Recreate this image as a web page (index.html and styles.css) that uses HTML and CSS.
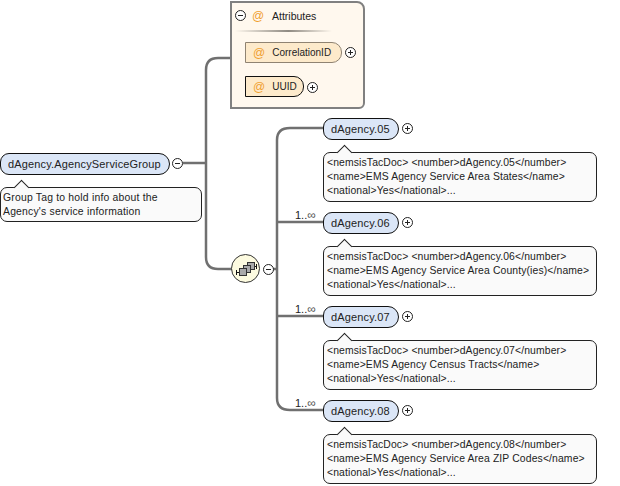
FILE: index.html
```html
<!DOCTYPE html>
<html lang="en">
<head>
<meta charset="utf-8">
<title>dAgency.AgencyServiceGroup</title>
<link rel="stylesheet" href="styles.css">
</head>
<body>
<main class="canvas">
  <svg class="wires" width="620" height="486" viewBox="0 0 620 486">
    <defs>
      <linearGradient id="sep" x1="0" x2="1" y1="0" y2="0">
        <stop offset="0" stop-color="#fff8ee"/>
        <stop offset=".55" stop-color="#8f8a82"/>
        <stop offset="1" stop-color="#fff8ee"/>
      </linearGradient>
    </defs>
    <g class="wire">
      <path d="M183 163H206"/>
      <path d="M232 58H218Q206 58 206 70V257Q206 269 218 269H232"/>
      <path d="M272 269H277"/>
      <path d="M323 128H290Q277 128 277 140V398Q277 410 290 410H323"/>
      <path d="M277 222H323"/>
      <path d="M277 316H323"/>
    </g>
  </svg>

  <div class="node root">dAgency.AgencyServiceGroup</div>
  <button class="toggle t-root minus"></button>
  <div class="doc doc-root">Group Tag to hold info about the<br>Agency's service information</div>

  <section class="attrs">
    <button class="toggle t-attrs minus"></button>
    <span class="at at-head">@</span>
    <span class="attrs-title">Attributes</span>
    <svg class="sep" width="97" height="2"><rect width="97" height="2" fill="url(#sep)"/></svg>
    <div class="attr a-corr"><span class="at">@</span><span>CorrelationID</span></div>
    <button class="toggle t-corr plus"></button>
    <div class="attr a-uuid"><span class="at">@</span><span>UUID</span></div>
    <button class="toggle t-uuid plus"></button>
  </section>

  <div class="compositor">
    <svg width="27" height="27" viewBox="0 0 27 27">
      <path class="c-line" d="M4 17.500H7M22 11.500H24"/>
      <path class="c-cap" d="M4.500 15V20M24.500 9V14"/>
      <rect class="c-box" x="15.500" y="7.500" width="7" height="7"/>
      <rect class="c-box" x="11.500" y="10.500" width="7" height="7"/>
      <rect class="c-box" x="7.500" y="13.500" width="7" height="7"/>
    </svg>
  </div>
  <button class="toggle t-comp minus"></button>

  <div class="node el e5">dAgency.05</div>
  <button class="toggle p5 plus"></button>
  <div class="doc d5">&lt;nemsisTacDoc&gt; &lt;number&gt;dAgency.05&lt;/number&gt;<br>&lt;name&gt;EMS Agency Service Area States&lt;/name&gt;<br>&lt;national&gt;Yes&lt;/national&gt;...</div>

  <span class="occ o6">1..<i>∞</i></span>
  <div class="node el e6">dAgency.06</div>
  <button class="toggle p6 plus"></button>
  <div class="doc d6">&lt;nemsisTacDoc&gt; &lt;number&gt;dAgency.06&lt;/number&gt;<br>&lt;name&gt;EMS Agency Service Area County(ies)&lt;/name&gt;<br>&lt;national&gt;Yes&lt;/national&gt;...</div>

  <span class="occ o7">1..<i>∞</i></span>
  <div class="node el e7">dAgency.07</div>
  <button class="toggle p7 plus"></button>
  <div class="doc d7">&lt;nemsisTacDoc&gt; &lt;number&gt;dAgency.07&lt;/number&gt;<br>&lt;name&gt;EMS Agency Census Tracts&lt;/name&gt;<br>&lt;national&gt;Yes&lt;/national&gt;...</div>

  <span class="occ o8">1..<i>∞</i></span>
  <div class="node el e8">dAgency.08</div>
  <button class="toggle p8 plus"></button>
  <div class="doc d8">&lt;nemsisTacDoc&gt; &lt;number&gt;dAgency.08&lt;/number&gt;<br>&lt;name&gt;EMS Agency Service Area ZIP Codes&lt;/name&gt;<br>&lt;national&gt;Yes&lt;/national&gt;...</div>
</main>
</body>
</html>
```
FILE: styles.css
```css
* { box-sizing: border-box; }
html, body { margin: 0; padding: 0; background: #fff; }
.canvas {
  position: relative;
  width: 620px;
  height: 486px;
  overflow: hidden;
  font-family: "Liberation Sans", Arial, sans-serif;
  color: #222;
}
.wires { position: absolute; left: 0; top: 0; }
.wire path { fill: none; stroke: #707070; stroke-width: 2.500; }

.node {
  position: absolute;
  display: flex;
  align-items: center;
  height: 22px;
  border: 1px solid #111;
  border-radius: 9px 11px 11px 9px;
  background: #dbe6f7;
  font-size: 11px;
  letter-spacing: .15px;
  white-space: nowrap;
}
.root { left: 0; top: 153px; width: 170px; padding-left: 7px; }
.el { left: 323px; width: 76px; padding: 0 0 1px 7px; }
.e5 { top: 118px; }
.e6 { top: 212px; }
.e7 { top: 306px; }
.e8 { top: 400px; }

.doc {
  position: absolute;
  border: 1px solid #222;
  border-radius: 7px;
  background: #fafafa;
  font-size: 10.400px;
  line-height: 14px;
  letter-spacing: .12px;
  white-space: nowrap;
}
.doc::before {
  content: "";
  position: absolute;
  left: 15px;
  top: -6px;
  width: 10px;
  height: 10px;
  background: #fafafa;
  border-left: 1px solid #222;
  border-top: 1px solid #222;
  transform: rotate(45deg);
  transform-origin: center;
}
.doc-root { left: 0; top: 187px; width: 202px; height: 35px; padding: 3px 0 0 2px; letter-spacing: .2px; }
.d5, .d6, .d7, .d8 { left: 323px; width: 274px; height: 50px; padding: 3px 0 0 3px; }
.d5 { top: 152px; }
.d6 { top: 246px; }
.d7 { top: 340px; }
.d8 { top: 434px; }

.toggle {
  position: absolute;
  width: 11px;
  height: 11px;
  padding: 0;
  border: 1px solid #222;
  border-radius: 50%;
  background: #fff;
}
.toggle::before {
  content: "";
  position: absolute;
  left: 2px;
  top: 4px;
  width: 5px;
  height: 1px;
  background: #222;
}
.plus::after {
  content: "";
  position: absolute;
  left: 4px;
  top: 2px;
  width: 1px;
  height: 5px;
  background: #222;
}
.t-root { left: 172px; top: 158px; }
.t-comp { left: 263px; top: 264px; }
.p5 { left: 402px; top: 123px; }
.p6 { left: 402px; top: 217px; }
.p7 { left: 402px; top: 311px; }
.p8 { left: 402px; top: 405px; }

.attrs {
  position: absolute;
  left: 230px;
  top: 1px;
  width: 135px;
  height: 108px;
  border: 2px solid #808080;
  border-radius: 0 8px 6px 0;
  background: #fff8ee;
  font-size: 10px;
}
.t-attrs { left: 3px; top: 7px; }
.t-corr { left: 113px; top: 44px; }
.t-uuid { left: 75px; top: 79px; }
.at { color: #f0a030; font-size: 12px; }
.at-head { position: absolute; left: 20px; top: 6px; }
.attrs-title { position: absolute; left: 40px; top: 7px; font-size: 10.500px; }
.sep { position: absolute; left: 3px; top: 27px; }
.attr {
  position: absolute;
  left: 13px;
  display: flex;
  align-items: center;
  gap: 7px;
  height: 21px;
  padding-left: 7px;
  border-radius: 0 10px 10px 0;
  background: #fdeacb;
}
.a-corr { top: 39px; width: 97px; border: 1px solid #8f8372; }
.a-uuid { top: 73px; width: 59px; border: 1px solid #111; }

.compositor {
  position: absolute;
  left: 231px;
  top: 254px;
  width: 29px;
  height: 29px;
  border: 1px solid #333;
  border-radius: 50%;
  background: #fdfbe0;
}
.compositor svg { display: block; }
.c-line, .c-cap { fill: none; stroke: #111; stroke-width: 1; }
.c-box { fill: #aaa; stroke: #333; stroke-width: 1; }

.occ { position: absolute; left: 295px; font-size: 11px; }
.occ i { font-style: normal; font-size: 12px; color: #555; }
.o6 { top: 208px; }
.o7 { top: 302px; }
.o8 { top: 396px; }
```
